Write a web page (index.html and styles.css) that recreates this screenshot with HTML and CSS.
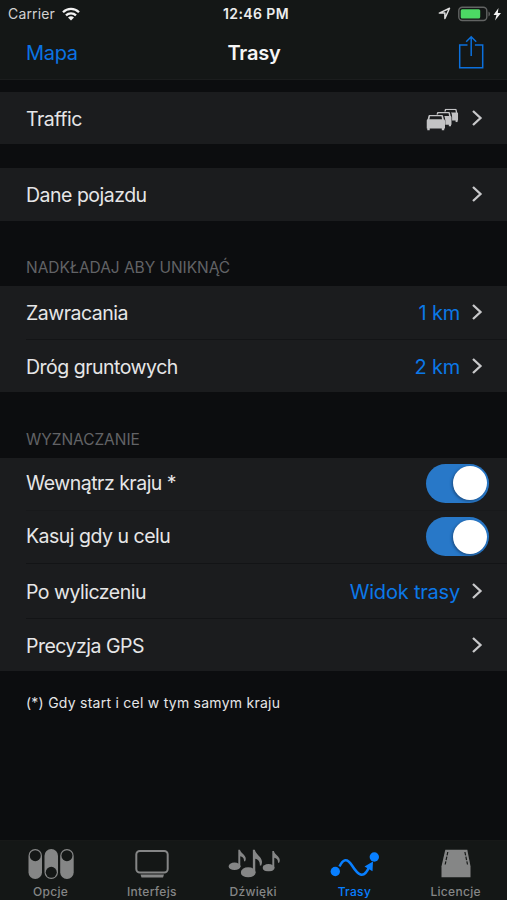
FILE: index.html
```html
<!DOCTYPE html>
<html lang="pl">
<head>
<meta charset="utf-8">
<title>Trasy</title>
<link rel="stylesheet" href="styles.css">
</head>
<body>
<svg width="0" height="0" class="defs">
  <symbol id="chevron" viewBox="0 0 12 18"><path d="M2 2l7.500 7L2 16" fill="none" stroke="#c8c8ca" stroke-width="2.300"/></symbol>
  <symbol id="note" viewBox="0 0 18 22" preserveAspectRatio="none"><ellipse cx="6.200" cy="18" rx="6.200" ry="4"/><path d="M10.100 18.500V0h1.600c.8 4.500 8.300 6.500 5.400 12.500h-1.200c.4-3-1.600-4.800-3.800-5.200v11.200z"/></symbol>
  <symbol id="car" viewBox="0 0 19 16" preserveAspectRatio="none"><path d="M3.500 0h12c1 0 1.400.5 1.600 1.300l.7 3.200c.9.300 1.200 1 1.200 1.800v7.700h-.8v2h-2.500v-2H3.300v2H.8v-2H0V6.300c0-.8.300-1.500 1.200-1.800l.7-3.200C2.100.5 2.500 0 3.500 0z" fill="#c3c3c5"/><path d="M3.600 1.300h11.800l.6 3H3z" fill="#1b1c1e"/></symbol>
</svg>
<div class="app">
  <header class="top">
    <div class="status">
      <div class="carrier"><span>Carrier</span>
        <svg width="18" height="14" viewBox="0 0 18 14"><g fill="none" stroke="#f2f2f2" stroke-width="2.300"><path d="M1 5.200a11.400 11.400 0 0 1 16 0"/><path d="M4 8.400a7.100 7.100 0 0 1 10 0"/></g><path d="M6 10.600a4.300 4.300 0 0 1 6 0l-3 3z" fill="#f2f2f2"/></svg>
      </div>
      <div class="clock">12:46 PM</div>
      <div class="power">
        <svg width="13" height="13" viewBox="0 0 13 13"><path d="M1.300 6.100L11.500 1.300 6.900 11.500V6.100z" fill="none" stroke="#dedede" stroke-width="1.500" stroke-linejoin="round"/></svg>
        <svg width="44" height="16" viewBox="0 0 44 16"><rect x=".8" y="1.300" width="28" height="13.200" rx="3.500" fill="none" stroke="#626463" stroke-width="1.400"/><rect x="2.700" y="3.200" width="19.500" height="9.400" rx="1.500" fill="#4cd964"/><path d="M30.500 5.500c2 1 2 4 0 5z" fill="#626463"/><path d="M40.500 2l-5 7h3l-1.500 5.500 6-7.500h-3.200z" fill="#f2f2f2"/></svg>
      </div>
    </div>
    <nav class="nav">
      <a class="back">Mapa</a>
      <h1>Trasy</h1>
      <svg class="share" width="26" height="34" viewBox="0 0 26 34"><path d="M9.500 10H1.700v22.700h23V10h-7.800M13.200 21V2M8.200 6.700l5-5 5 5" fill="none" stroke="#0b70dc" stroke-width="1.500"/></svg>
    </nav>
  </header>
  <main>
    <section class="group traffic">
      <div class="row"><span>Traffic</span>
        <svg class="cars" width="33" height="23" viewBox="0 0 33 23"><use href="#car" x="17.200" y=".8" width="15" height="13.500"/><path d="M8.800 18V6q0-2.500 2.500-2.500h12.500q2 0 2.300 5.500v9z" fill="#1b1c1e"/><use href="#car" x="9.200" y="4" width="16.500" height="14.500"/><path d="M0 22V9q1-2.600 3.500-2.600h13q2.300 0 2.800 6V22z" fill="#1b1c1e"/><use href="#car" x=".5" y="7" width="18.500" height="15.500"/></svg>
        <svg class="chevron"><use href="#chevron"/></svg></div>
    </section>
    <section class="group vehicle">
      <div class="row"><span>Dane pojazdu</span><svg class="chevron"><use href="#chevron"/></svg></div>
    </section>
    <h2>NADKŁADAJ ABY UNIKNĄĆ</h2>
    <section class="group avoid">
      <div class="row"><span>Zawracania</span><b>1 km</b><svg class="chevron"><use href="#chevron"/></svg></div>
      <div class="row"><span>Dróg gruntowych</span><b>2 km</b><svg class="chevron"><use href="#chevron"/></svg></div>
    </section>
    <h2 class="routing-title">WYZNACZANIE</h2>
    <section class="group routing">
      <div class="row switch-row"><span>Wewnątrz kraju *</span><i class="switch"></i></div>
      <div class="row switch-row"><span>Kasuj gdy u celu</span><i class="switch"></i></div>
      <div class="row"><span>Po wyliczeniu</span><b>Widok trasy</b><svg class="chevron"><use href="#chevron"/></svg></div>
      <div class="row"><span>Precyzja GPS</span><svg class="chevron"><use href="#chevron"/></svg></div>
    </section>
    <p class="footnote">(*) Gdy start i cel w tym samym kraju</p>
  </main>
  <footer class="tabs">
    <div class="tab"><svg width="46" height="32" viewBox="0 0 46 32"><g fill="#858686"><rect x=".5" y="1" width="13.500" height="30" rx="6.700"/><rect x="16.500" y="1" width="13.500" height="30" rx="6.700"/><rect x="32.200" y="1" width="13.500" height="30" rx="6.700"/></g><g fill="#141716"><circle cx="7.250" cy="7.700" r="5.500"/><circle cx="23.250" cy="24.300" r="5.500"/><circle cx="38.950" cy="7.700" r="5.500"/></g></svg><span>Opcje</span></div>
    <div class="tab"><svg width="34" height="32" viewBox="0 0 34 32"><rect x="1.300" y="3" width="31.400" height="21.500" rx="3.500" fill="none" stroke="#858686" stroke-width="2"/><path d="M5.500 26.500h23.500l-1 3H6.500z" fill="#858686"/></svg><span>Interfejs</span></div>
    <div class="tab"><svg width="53" height="32" viewBox="0 0 53 32" fill="#858686"><use href="#note" x="1.500" y="1.500" width="17.500" height="20.500"/><use href="#note" x="13.800" y="1.500" width="21.500" height="28"/><use href="#note" x="35.500" y="3" width="17.500" height="20.500"/></svg><span>Dźwięki</span></div>
    <div class="tab active"><svg width="50" height="32" viewBox="0 0 50 32"><g fill="#087fff"><circle cx="6.300" cy="23.500" r="4.700"/><circle cx="45.300" cy="9" r="4.700"/><path d="M44 13.500l-8.500 5 8 4.800z"/></g><path d="M10.500 18.500C14 11 18 9.500 23 17.500 28.500 26 34.500 33 40.500 18" fill="none" stroke="#087fff" stroke-width="2.500"/></svg><span>Trasy</span></div>
    <div class="tab"><svg width="32" height="32" viewBox="0 0 32 32"><path d="M5.300 1.800h22l3.200 16.500v11h-29v-11z" fill="#858686"/><path d="M7.800 4L5.200 16.500M24.900 4l2.600 12.500" fill="none" stroke="#171918" stroke-width="1.200" stroke-dasharray="3.500 1.300"/></svg><span>Licencje</span></div>
  </footer>
</div>
</body>
</html>
```

FILE: styles.css
```css
* { box-sizing: border-box; }
body { margin: 0; background: #0c0d0f; color: #e6e6e7; font-family: Inter, "Liberation Sans", sans-serif; }
.defs { position: absolute; }
.app { width: 507px; height: 900px; display: flex; flex-direction: column; overflow: hidden; }
.top { height: 80px; background: #141716; border-bottom: 1px solid #1b1d1d; flex: none; }
.status { height: 27px; display: grid; grid-template-columns: 1fr auto 1fr; align-items: center; padding: 0 5px 0 8px; font-size: 14px; }
.carrier { display: flex; align-items: center; gap: 7px; color: #d2d2d2; letter-spacing: .15px; }
.clock { font-weight: 600; color: #ededed; font-size: 14px; letter-spacing: .4px; margin-left: 2px; }
.power { display: flex; justify-content: flex-end; align-items: center; gap: 7px; }
.nav { height: 52px; display: grid; grid-template-columns: 1fr auto 1fr; align-items: center; padding: 0 23px 1px 26px; }
.back { color: #0b73e3; font-size: 20px; letter-spacing: -.3px; }
h1 { margin: 0; font-size: 20px; font-weight: 600; color: #f5f5f5; letter-spacing: -.2px; transform: translateX(-1px); }
.share { justify-self: end; margin-top: -2px; }
main { flex: 1; display: flex; flex-direction: column; }
.group { background: #1b1c1e; }
.traffic { margin-top: 12px; height: 52px; }
.vehicle { margin-top: 24px; height: 53px; }
.avoid { height: 106px; }
.row { height: 53px; display: flex; align-items: center; padding: 0 24px 0 26px; font-size: 19.5px; letter-spacing: -.5px; position: relative; }
.row > span { flex: 1; padding-top: 1px; }
.row b { font-weight: 400; color: #0b78e8; font-size: 20px; margin-right: 11px; letter-spacing: -.2px; padding-top: 1px; }
.row + .row { height: 54px; }
.row + .row::before { content: ""; position: absolute; left: 26px; right: 0; top: 0; height: 1px; background: #131416; }
.group .chevron { width: 12px; height: 18px; margin-top: -1px; }
.cars { margin: 2px 12px 0 0; }
h2 { margin: 37px 0 8px; padding-left: 26px; font-size: 15.5px; font-weight: 400; line-height: 20px; letter-spacing: -.05px; color: #626366; }
.routing-title { margin-top: 38px; }
.routing .row:nth-child(1) { height: 52px; }
.routing .row:nth-child(2) { height: 53px; padding-bottom: 0; }
.routing .row:nth-child(2)::before { background: #18191b; }
.routing .row:nth-child(3) { height: 55px; padding-top: 1px; }
.routing .row:nth-child(4) { height: 53px; padding-top: 1px; }
.routing .switch-row { padding: 0 18px 2px 26px; }
.switch-row > span { padding: 0 0 1px; }
.switch { width: 63px; height: 39px; border-radius: 20px; background: #2878c8; display: flex; justify-content: flex-end; padding: 2.5px; }
.switch::after { content: ""; width: 34px; height: 34px; border-radius: 50%; background: #fff; box-shadow: -1px 1px 3px #1a4b80; }
.footnote { margin: 22px 0 0 26px; font-size: 14px; line-height: 20px; letter-spacing: .25px; }
.tabs { height: 60px; flex: none; background: #141716; display: grid; grid-template-columns: repeat(5, 101.25px); border-top: 1px solid #171918; }
.tab { display: flex; flex-direction: column; align-items: center; padding-top: 7px; color: #858686; font-size: 12px; font-weight: 500; line-height: 16px; letter-spacing: .3px; }
.tab span { margin-top: 4px; }
.active { color: #087fff; }
```
